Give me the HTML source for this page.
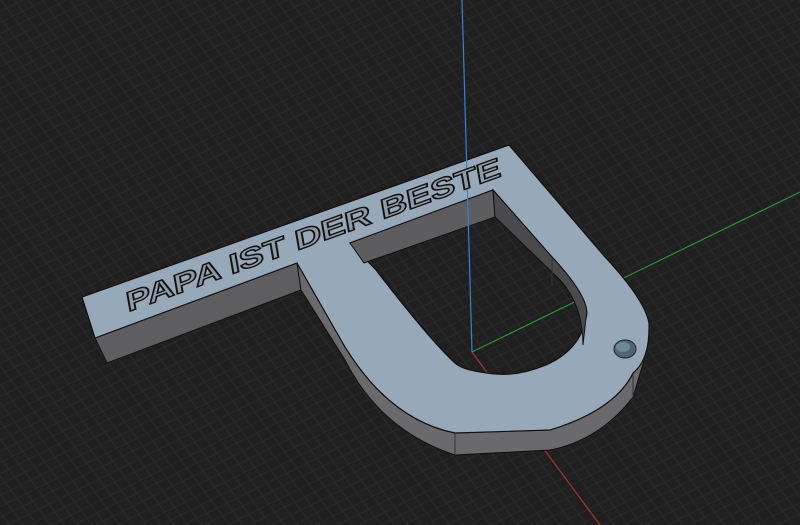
<!DOCTYPE html>
<html><head><style>
html,body{margin:0;padding:0;background:#1f1f1f;}
svg{display:block}
</style></head><body>
<svg width="800" height="525" viewBox="0 0 800 525" xmlns="http://www.w3.org/2000/svg">
<defs>
<pattern id="g" width="10" height="10" patternUnits="userSpaceOnUse" patternTransform="matrix(1 -0.5 0.6 0.8 0 0)">
<rect width="10" height="10" fill="#1f1f1f"/>
<path d="M0 0.5H10M0.5 0V10" stroke="#282828" stroke-width="1"/>
</pattern>
</defs>
<rect width="800" height="525" fill="url(#g)"/>
<line x1="472" y1="352" x2="800" y2="192" stroke="#2f8f3a" stroke-width="1.2"/>
<line x1="472" y1="352" x2="600" y2="525" stroke="#a0352f" stroke-width="1.2"/>
<path d="M95 338 L107 363 L301 290 L297 263 Z" fill="#5e5e61" stroke="#111" stroke-width="1"/>
<path d="M297 263 L345 347 Q390 420 455 433 L550 430 Q615 410 633 373 L649 323 L645 357 L633 397 Q600 440 550 450 L455 455 Q380 430 345 360 L301 290 Z" fill="#6a6a6d" stroke="#111" stroke-width="1"/>
<line x1="455" y1="434" x2="455" y2="455" stroke="#333"/>
<line x1="633" y1="373" x2="633" y2="397" stroke="#333"/>
<path fill-rule="evenodd" fill="#97a9b8" stroke="#111" stroke-width="1.2"
d="M82 297 L509 145 L605 257 Q645 300 649 323 Q650 360 633 373 Q615 410 550 430 L455 433 Q390 420 345 347 L297 263 L95 338 Z
M350 243 L493 190 L552 257 Q592 300 586 318 Q580 350 546 365 Q515 378 487 373 Q462 370 455 363 Q430 340 376 270 Z"/>
<path d="M350 243 L493 190 L495 217 L364 263 Z" fill="#5d5d60" stroke="#111" stroke-width="1"/>
<path d="M493 190 L552 257 Q592 300 586 318 L583 345 Q583 305 560 280 L495 217 Z" fill="#4a4a4d" stroke="#111" stroke-width="1"/>
<line x1="552" y1="257" x2="552" y2="285" stroke="#333"/>
<ellipse cx="625" cy="349" rx="11" ry="9" fill="#4f6674" stroke="#222"/>
<ellipse cx="623" cy="347" rx="7" ry="5" fill="#6f8897"/>
<line x1="462" y1="0" x2="472" y2="352" stroke="#3a7fd0" stroke-width="1.2"/>
<text x="0" y="0" transform="translate(128 312) rotate(-20) skewX(-10)" font-family="Liberation Sans, sans-serif" font-weight="bold" font-size="27" fill="#8e9aa4" stroke="#111" stroke-width="1.4" textLength="398" lengthAdjust="spacingAndGlyphs">PAPA IST DER BESTE</text>
</svg>
</body></html>
